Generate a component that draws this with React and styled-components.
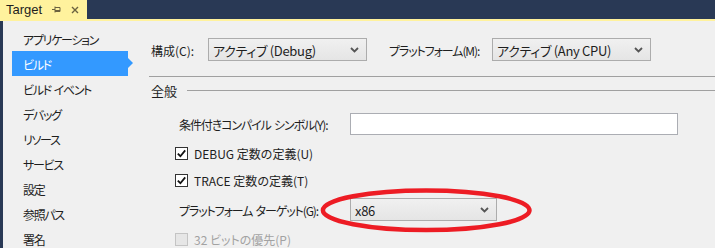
import React from 'react';
import styled, { createGlobalStyle } from 'styled-components';

const GlobalStyle = createGlobalStyle`
  html, body {
    margin: 0;
    padding: 0;
    background: #f0f0f0;
  }
  body {
    font-family: 'Noto Sans CJK JP', 'Noto Sans', sans-serif;
    font-size: 12px;
    color: #1e1e1e;
  }
`;

const Window = styled.div`
  position: relative;
  width: 715px;
  height: 248px;
  display: flex;
  flex-direction: column;
  overflow: hidden;
  background: #f0f0f0;
  font-feature-settings: 'palt';
`;

const TabBar = styled.div`
  flex: 0 0 auto;
  height: 19px;
  display: flex;
  background: #293955;
  border-bottom: 2px solid #fff29d;
`;

const Tab = styled.div`
  width: 87px;
  display: flex;
  align-items: center;
  padding-left: 6px;
  box-sizing: border-box;
  background: #fff29d;
  font-family: 'Liberation Sans', Arial, sans-serif;
  font-size: 13px;
  color: #1e1e1e;
`;

const TabTitle = styled.span`
  margin-right: 10px;
`;

const TabIcon = styled.svg`
  margin-right: ${p => p.$gap || 0}px;
`;

const Body = styled.div`
  flex: 1 1 auto;
  min-height: 0;
  display: flex;
  border-left: 3px solid #293955;
  overflow: hidden;
`;

const Sidebar = styled.ul`
  list-style: none;
  margin: 0;
  padding: 5px 0 0 9px;
  width: 137px;
  flex: 0 0 137px;
  box-sizing: border-box;
`;

const NavItem = styled.li`
  position: relative;
  height: 25px;
  width: 116px;
  display: flex;
  align-items: center;
  padding: 1px 0 0 11px;
  box-sizing: border-box;
  letter-spacing: -1.3px;
  white-space: pre;
  background: ${p => (p.$active ? '#3399ff' : 'transparent')};
  color: ${p => (p.$active ? '#ffffff' : '#1e1e1e')};

  &::after {
    content: '';
    display: ${p => (p.$active ? 'block' : 'none')};
    position: absolute;
    right: -5px;
    top: 7px;
    border-style: solid;
    border-width: 5px 0 5px 5px;
    border-color: transparent transparent transparent #3399ff;
  }
`;

const Main = styled.div`
  flex: 1;
  padding: 17px 0 0 9px;
  display: flex;
  flex-direction: column;
`;

const ConfigRow = styled.div`
  flex: 0 0 auto;
  display: flex;
  align-items: center;
  height: 23px;
  padding-left: 2px;
`;

const Label = styled.span`
  width: ${p => (p.$width ? `${p.$width}px` : 'auto')};
  flex: 0 0 auto;
  padding-top: 1px;
  white-space: pre;
  letter-spacing: ${p => (p.$kana ? '-1.1px' : '0')};
  color: ${p => (p.$disabled ? '#a2a2a2' : '#1e1e1e')};
`;

const Select = styled.div`
  width: ${p => p.$width}px;
  height: 23px;
  flex: 0 0 auto;
  box-sizing: border-box;
  border: 1px solid #acacac;
  background: linear-gradient(#f0f0f0, #e5e5e5);
  display: flex;
  align-items: center;
  justify-content: space-between;
  padding: 1px 7px 0 4px;
  margin-right: ${p => p.$mr || 0}px;
  font-size: 13px;
  letter-spacing: -0.3px;
`;

const Divider = styled.div`
  flex: 0 0 auto;
  margin-top: 15px;
  height: 1px;
  background: #a0a0a0;
`;

const SectionHeader = styled.div`
  flex: 0 0 auto;
  height: 26px;
  display: flex;
  align-items: center;
  gap: 10px;
  padding: 1px 0 0 2px;
  box-sizing: border-box;
  font-size: 13px;

  &::after {
    content: '';
    flex: 1;
    height: 1px;
    background: #a0a0a0;
  }
`;

const FormRow = styled.div`
  flex: 0 0 auto;
  display: flex;
  align-items: center;
  height: ${p => p.$h}px;
  margin-top: ${p => p.$mt}px;
  padding-left: ${p => p.$indent}px;
`;

const TextInput = styled.div`
  width: 328px;
  height: 22px;
  box-sizing: border-box;
  border: 1px solid #abadb3;
  background: #ffffff;
`;

const Box = styled.span`
  width: 13px;
  height: 13px;
  box-sizing: border-box;
  border: 1px solid ${p => (p.$disabled ? '#c4c4c4' : '#333333')};
  background: ${p => (p.$disabled ? '#e6e6e6' : '#ffffff')};
  display: flex;
  align-items: center;
  justify-content: center;
  margin-right: 6px;
`;

const Highlight = styled.svg`
  position: absolute;
  left: 316px;
  top: 186px;
  pointer-events: none;
`;

const Chevron = () => (
  <svg width="9" height="6" viewBox="0 0 9 6">
    <path d="M1 1 L4.5 4.5 L8 1" fill="none" stroke="#555" strokeWidth="1.8" />
  </svg>
);

const Checkbox = ({ checked, disabled, children }) => (
  <>
    <Box $disabled={disabled}>
      {checked && (
        <svg width="11" height="11" viewBox="0 0 11 11">
          <path d="M1.8 5.6 L4.4 8.2 L9.2 2.4" fill="none" stroke="#111" strokeWidth="1.8" />
        </svg>
      )}
    </Box>
    <Label $disabled={disabled}>{children}</Label>
  </>
);

const navItems = [
  'アプリケーション',
  'ビルド',
  'ビルド  イベント',
  'デバッグ',
  'リソース',
  'サービス',
  '設定',
  '参照パス',
  '署名',
];

export default function App() {
  return (
    <Window>
      <GlobalStyle />
      <TabBar>
        <Tab>
          <TabTitle>Target</TabTitle>
          <TabIcon width="9" height="9" viewBox="0 0 9 9" $gap={10}>
            <path d="M0 4.5 H3 M3 1.5 V7.5 M3 2.5 H8 V6.5 H3 M3 5.5 H8" fill="none" stroke="#6b6240" strokeWidth="1" />
          </TabIcon>
          <TabIcon width="8" height="8" viewBox="0 0 8 8">
            <path d="M1 1 L7 7 M7 1 L1 7" stroke="#6b6240" strokeWidth="1.4" />
          </TabIcon>
        </Tab>
      </TabBar>
      <Body>
        <Sidebar>
          {navItems.map(item => (
            <NavItem key={item} $active={item === 'ビルド'}>{item}</NavItem>
          ))}
        </Sidebar>
        <Main>
          <ConfigRow>
            <Label $width={57}>構成(C):</Label>
            <Select $width={159} $mr={22}>
              アクティブ (Debug)
              <Chevron />
            </Select>
            <Label $width={103} $kana>プラットフォーム(M):</Label>
            <Select $width={159}>
              アクティブ (Any CPU)
              <Chevron />
            </Select>
          </ConfigRow>
          <Divider />
          <SectionHeader>全般</SectionHeader>
          <FormRow $h={22} $mt={10} $indent={30}>
            <Label $width={171} $kana>条件付きコンパイル  シンボル(Y):</Label>
            <TextInput />
          </FormRow>
          <FormRow $h={26} $mt={5} $indent={26}>
            <Checkbox checked>DEBUG 定数の定義(U)</Checkbox>
          </FormRow>
          <FormRow $h={26} $mt={1} $indent={26}>
            <Checkbox checked>TRACE 定数の定義(T)</Checkbox>
          </FormRow>
          <FormRow $h={23} $mt={5} $indent={30}>
            <Label $width={171} $kana>プラットフォーム  ターゲット(G):</Label>
            <Select $width={147}>
              x86
              <Chevron />
            </Select>
          </FormRow>
          <FormRow $h={26} $mt={5} $indent={26}>
            <Checkbox disabled>32 ビットの優先(P)</Checkbox>
          </FormRow>
        </Main>
      </Body>
      <Highlight width="220" height="50" viewBox="0 0 220 50">
        <ellipse cx="110.2" cy="24.3" rx="103.3" ry="19.8" fill="none" stroke="#ed1c24" strokeWidth="4.5" />
      </Highlight>
    </Window>
  );
}
